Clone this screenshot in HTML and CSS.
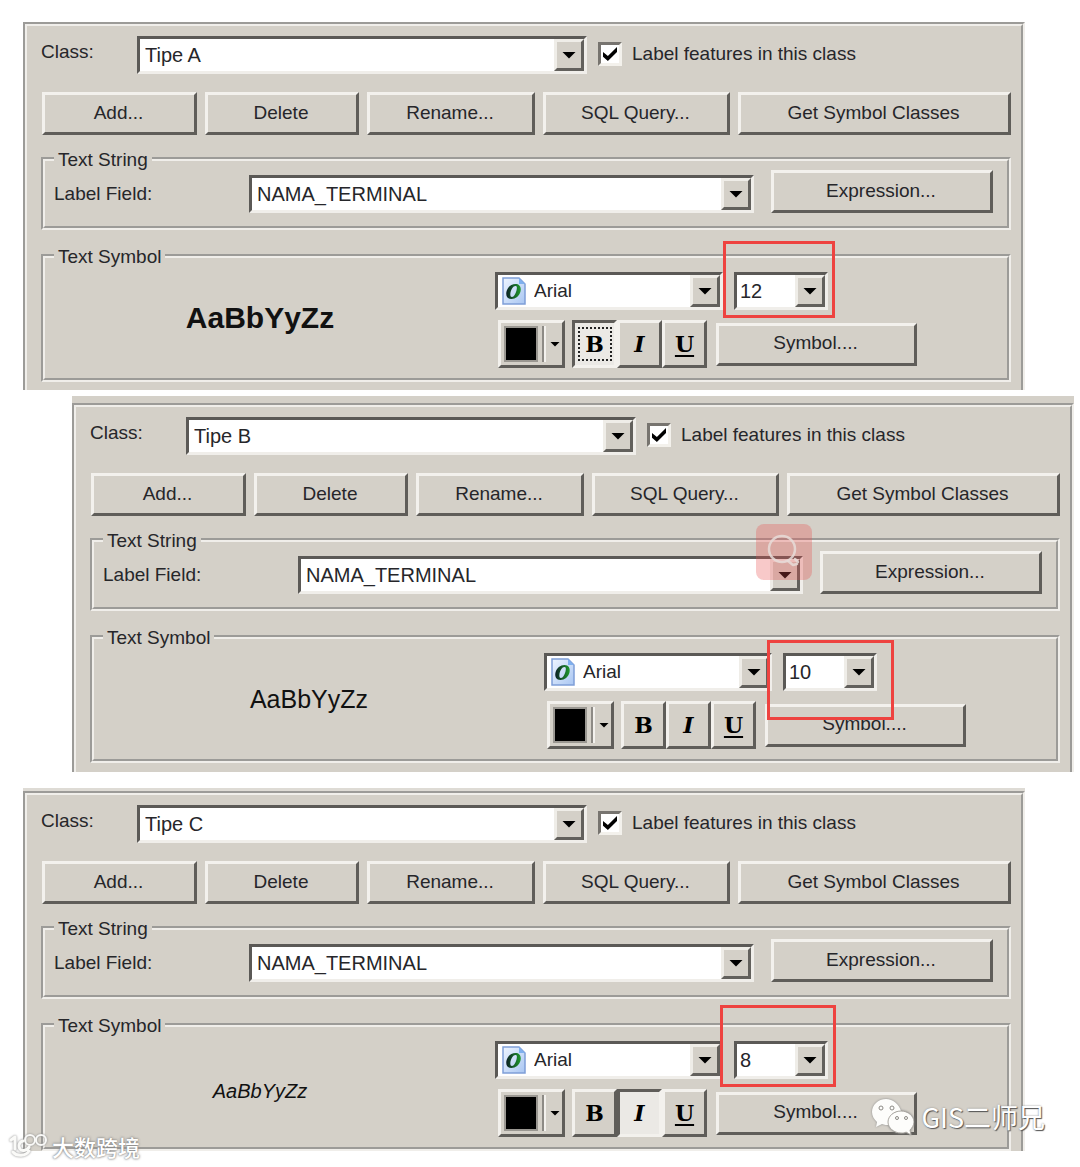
FILE: index.html
```html
<!DOCTYPE html>
<html lang="en">
<head>
<meta charset="utf-8">
<title>Label classes</title>
<link rel="stylesheet" href="styles.css">
</head>
<body>
<svg class="defs" aria-hidden="true">
  <defs>
    <linearGradient id="page" x1="0" y1="0" x2="1" y2="1"><stop offset="0" stop-color="#eef5ff"/><stop offset="1" stop-color="#a9c6f2"/></linearGradient>
    <linearGradient id="oh" x1="0" y1="0" x2="1" y2="0"><stop offset="0" stop-color="#0c2024"/><stop offset="1" stop-color="#1f9a2c"/></linearGradient>
    <symbol id="opentype" viewBox="0 0 24 28">
      <path d="M1 1h16l6 6v20H1z" fill="url(#page)" stroke="#7f9fd8" stroke-width="1.5"/>
      <path d="M17 1v6h6z" fill="#7fb0ee"/>
      <path fill-rule="evenodd" fill="url(#oh)" d="M13.500 7C17.500 7 19.500 10 18.500 14.500C17.500 19 13.500 22 9.500 22C5.500 22 3.500 19 4.500 14.500C5.500 10 9.500 7 13.500 7zM13.500 9C11 9 9.500 12 8.500 15.500C8 18.500 8.500 20 10 20C12 20 13.500 17 14.500 13.500C15.200 10.500 15 9 13.500 9z"/>
    </symbol>
  </defs>
</svg>
<main class="page">

  <section class="panel">
    <div class="class-row">
      <label class="class-label" for="class-a">Class:</label>
      <div class="combo"><select id="class-a"><option>Tipe A</option></select><span class="arrow"></span></div>
      <label class="check"><input type="checkbox" checked>Label features in this class</label>
    </div>
    <div class="actions">
      <button class="btn">Add...</button><button class="btn">Delete</button><button class="btn">Rename...</button><button class="btn">SQL Query...</button><button class="btn">Get Symbol Classes</button>
    </div>
    <fieldset class="group">
      <legend>Text String</legend>
      <div class="field-row">
        <label for="field-a">Label Field:</label>
        <div class="combo"><select id="field-a"><option>NAMA_TERMINAL</option></select><span class="arrow"></span></div>
        <button class="btn">Expression...</button>
      </div>
    </fieldset>
    <fieldset class="group">
      <legend>Text Symbol</legend>
      <div class="symbol-grid">
        <div class="preview preview-bold">AaBbYyZz</div>
        <div class="controls">
          <div class="font-row">
            <div class="combo font"><svg class="font-icon"><use href="#opentype"/></svg><select aria-label="Font"><option>Arial</option></select><span class="arrow"></span></div>
            <div class="size"><div class="combo"><select aria-label="Size"><option>12</option></select><span class="arrow"></span></div><span class="mark mark-a"></span></div>
          </div>
          <div class="style-row">
            <button class="color" aria-label="Color"><span class="swatch"></span><span class="divider"></span><span class="caret"></span></button>
            <div class="toggles"><button class="toggle on focused" aria-label="Bold"><b>B</b></button><button class="toggle" aria-label="Italic"><i>I</i></button><button class="toggle" aria-label="Underline"><u>U</u></button></div>
            <button class="btn symbol">Symbol....</button>
          </div>
        </div>
      </div>
    </fieldset>
  </section>

  <section class="panel panel-b">
    <div class="class-row">
      <label class="class-label" for="class-b">Class:</label>
      <div class="combo"><select id="class-b"><option>Tipe B</option></select><span class="arrow"></span></div>
      <label class="check"><input type="checkbox" checked>Label features in this class</label>
    </div>
    <div class="actions">
      <button class="btn">Add...</button><button class="btn">Delete</button><button class="btn">Rename...</button><button class="btn">SQL Query...</button><button class="btn">Get Symbol Classes</button>
    </div>
    <fieldset class="group">
      <legend>Text String</legend>
      <div class="field-row">
        <label for="field-b">Label Field:</label>
        <div class="combo"><select id="field-b"><option>NAMA_TERMINAL</option></select><span class="arrow"></span>
          <svg class="search-badge" viewBox="0 0 56 56"><rect width="56" height="56" rx="8" fill="#e84c4c" fill-opacity=".3"/><g fill="none" stroke="#e6dcd8" stroke-opacity=".85" stroke-width="2.5" stroke-linecap="round"><circle cx="26" cy="25" r="13"/><path d="M32 37l5 4M39 35l3 3M37 41l4-1"/></g></svg>
        </div>
        <button class="btn">Expression...</button>
      </div>
    </fieldset>
    <fieldset class="group">
      <legend>Text Symbol</legend>
      <div class="symbol-grid">
        <div class="preview preview-regular">AaBbYyZz</div>
        <div class="controls">
          <div class="font-row">
            <div class="combo font"><svg class="font-icon"><use href="#opentype"/></svg><select aria-label="Font"><option>Arial</option></select><span class="arrow"></span></div>
            <div class="size"><div class="combo"><select aria-label="Size"><option>10</option></select><span class="arrow"></span></div><span class="mark mark-b"></span></div>
          </div>
          <div class="style-row">
            <button class="color" aria-label="Color"><span class="swatch"></span><span class="divider"></span><span class="caret"></span></button>
            <div class="toggles"><button class="toggle" aria-label="Bold"><b>B</b></button><button class="toggle" aria-label="Italic"><i>I</i></button><button class="toggle" aria-label="Underline"><u>U</u></button></div>
            <button class="btn symbol">Symbol....</button>
          </div>
        </div>
      </div>
    </fieldset>
  </section>

  <section class="panel panel-c">
    <div class="class-row">
      <label class="class-label" for="class-c">Class:</label>
      <div class="combo"><select id="class-c"><option>Tipe C</option></select><span class="arrow"></span></div>
      <label class="check"><input type="checkbox" checked>Label features in this class</label>
    </div>
    <div class="actions">
      <button class="btn">Add...</button><button class="btn">Delete</button><button class="btn">Rename...</button><button class="btn">SQL Query...</button><button class="btn">Get Symbol Classes</button>
    </div>
    <fieldset class="group">
      <legend>Text String</legend>
      <div class="field-row">
        <label for="field-c">Label Field:</label>
        <div class="combo"><select id="field-c"><option>NAMA_TERMINAL</option></select><span class="arrow"></span></div>
        <button class="btn">Expression...</button>
      </div>
    </fieldset>
    <fieldset class="group">
      <legend>Text Symbol</legend>
      <div class="symbol-grid">
        <div class="preview preview-italic">AaBbYyZz</div>
        <div class="controls">
          <div class="font-row">
            <div class="combo font"><svg class="font-icon"><use href="#opentype"/></svg><select aria-label="Font"><option>Arial</option></select><span class="arrow"></span></div>
            <div class="size"><div class="combo"><select aria-label="Size"><option>8</option></select><span class="arrow"></span></div><span class="mark mark-c"></span></div>
          </div>
          <div class="style-row">
            <button class="color" aria-label="Color"><span class="swatch"></span><span class="divider"></span><span class="caret"></span></button>
            <div class="toggles"><button class="toggle" aria-label="Bold"><b>B</b></button><button class="toggle on" aria-label="Italic"><i>I</i></button><button class="toggle" aria-label="Underline"><u>U</u></button></div>
            <button class="btn symbol">Symbol....</button>
          </div>
        </div>
      </div>
    </fieldset>
  </section>

  <div class="credit credit-left">
    <svg width="38" height="24" viewBox="0 0 38 24" fill="none" stroke="#fafaf8" stroke-linecap="round" stroke-linejoin="round"><path d="M2 6l4-3v12" stroke-width="3"/><path d="M14 7c-4 1-5 5-3 8c2 3 8 1 9-2M4 18c4 5 13 4 16-1" stroke-width="3"/><circle cx="21" cy="6" r="5" stroke-width="2"/><circle cx="32" cy="6" r="5" stroke-width="2"/></svg>
    <span>大数跨境</span>
  </div>
  <div class="credit credit-right">
    <svg width="42" height="36" viewBox="0 0 42 36"><path d="M14 0C6 0 0 6 0 13c0 4 2 7 5 10l-1 5 6-3c2 1 5 1 7 1-2-8 4-14 12-14C27 5 21 0 14 0z" fill="#fdfdfb"/><path d="M29 12c-7 0-13 5-13 11s6 11 13 11c2 0 4 0 5-1l5 3-1-5c2-2 4-5 4-8 0-6-6-11-13-11z" fill="#fdfdfb" stroke="#aaa7a1"/><g fill="#fdfdfb" stroke="#8c8a85"><circle cx="9" cy="9" r="2"/><circle cx="20" cy="9" r="2"/><circle cx="25" cy="19" r="1.500"/><circle cx="34" cy="19" r="1.500"/></g></svg>
    <span>GIS二师兄</span>
  </div>
</main>
</body>
</html>
```
FILE: styles.css
```css
* { box-sizing: border-box; }

body {
  margin: 0;
  background: #fff;
  color: #26262a;
  font: 19px/24px "Liberation Sans", Arial, sans-serif;
}

.defs { position: absolute; width: 0; height: 0; }

.page { position: relative; padding: 22px 55px 15px 23px; }

.panel {
  padding: 10px 10px 8px 14px;
  border: 4px groove #f0eeea;
  border-bottom: 0;
  background: #d4d0c8;
}
.panel-b { margin: 13px -49px 0 49px; padding-bottom: 9px; box-shadow: 0 -7px 0 #d4d0c8; }
.panel-c { margin-top: 19px; padding-bottom: 0; box-shadow: 0 -3px 0 #dedbd5; }

button, select { margin: 0; color: inherit; font: inherit; }

.class-row { display: grid; grid-template-columns: 96fr 450fr 424fr; align-items: center; }
.class-label { padding-bottom: 6px; }
.check { display: flex; align-items: center; gap: 10px; padding: 0 0 2px 11px; white-space: nowrap; }
.check input {
  appearance: none;
  width: 24px;
  height: 24px;
  margin: 0;
  border: 3px solid;
  border-color: #77746f #f3f1ec #f3f1ec #77746f;
  background: #fff;
  display: grid;
  place-items: center;
}
.check input:checked::before {
  content: "";
  width: 14px;
  height: 14px;
  background: #000;
  clip-path: polygon(0 35%, 35% 65%, 100% 0, 100% 35%, 35% 100%, 0 70%);
}

.combo {
  position: relative;
  display: grid;
  height: 38px;
  border: 3px solid;
  border-color: #5b5956 #f0eeea #f0eeea #5b5956;
  background: #fff;
}
.combo select {
  grid-area: 1 / 1;
  appearance: none;
  width: 100%;
  min-width: 0;
  padding: 0 32px 0 5px;
  border: 0;
  border-radius: 0;
  background: transparent;
  font-size: 20px;
}
.arrow {
  grid-area: 1 / 1;
  justify-self: end;
  display: grid;
  place-items: center;
  width: 30px;
  border: 3px solid;
  border-color: #efede8 #62605c #62605c #efede8;
  background: #d4d0c8;
  pointer-events: none;
}
.arrow::before, .caret {
  content: "";
  width: 14px;
  height: 7px;
  background: #000;
  clip-path: polygon(0 0, 100% 0, 50% 100%);
}

.actions {
  display: grid;
  grid-template-columns: 155fr 154fr 168fr 187fr 273fr;
  gap: 8px;
  margin: 18px 0 12px 1px;
}
.btn {
  height: 43px;
  padding: 0 2px 2px 0;
  border: 3px solid;
  border-color: #f3f1ed #5f5d59 #5f5d59 #f3f1ed;
  border-radius: 0;
  background: #d4d0c8;
  white-space: nowrap;
}

.group {
  min-width: 0;
  margin: 0;
  padding: 0 14px 13px 9px;
  border: 4px groove #f0eeea;
}
.group + .group { margin-top: 14px; padding-bottom: 10px; }
.group legend { padding: 3px 4px 0; line-height: 20px; }

.field-row { display: grid; grid-template-columns: 195fr 522fr 222fr; align-items: end; }
.field-row label { padding-bottom: 7px; }
.field-row .combo { margin-right: 17px; }

.symbol-grid { display: grid; grid-template-columns: 412fr 498fr; gap: 29px; }
.preview { align-self: center; color: #111; text-align: center; }
.preview-bold { font-size: 30px; font-weight: bold; }
.preview-regular { font-size: 25px; }
.preview-italic { padding-top: 8px; font-size: 20px; font-style: italic; }
.controls { padding-top: 5px; }
.font-row { display: flex; gap: 11px; }
.font { width: 228px; }
.font-icon { grid-area: 1 / 1; align-self: center; width: 24px; height: 28px; margin-left: 4px; }
.font select { padding-left: 36px; font-size: 19px; }
.size { position: relative; width: 94px; }
.size select { padding-left: 3px; }

.style-row { display: flex; align-items: center; margin: 10px 0 0 3px; }
.color {
  display: flex;
  align-items: center;
  width: 67px;
  height: 48px;
  padding: 0 0 0 3px;
  border: 3px solid;
  border-color: #f3f1ed #5f5d59 #5f5d59 #f3f1ed;
  background: #d4d0c8;
}
.swatch { width: 34px; height: 36px; border: 2px solid #9a9791; background: #000; }
.divider { width: 4px; height: 36px; margin: 0 4px; border-left: 2px solid #8d8a85; border-right: 2px solid #f3f1ed; }
.caret { width: 10px; height: 5px; }
.toggles { display: flex; width: 135px; margin: 0 9px 0 7px; }
.toggle {
  display: grid;
  place-items: center;
  flex: 1;
  height: 48px;
  padding: 0;
  border: 3px solid;
  border-color: #f3f1ed #5f5d59 #5f5d59 #f3f1ed;
  background: #d4d0c8;
  color: #000;
  font: bold 22px/24px "DejaVu Serif", serif;
}
.toggle.on { border-color: #5f5d59 #f3f1ed #f3f1ed #5f5d59; background: #ebe9e5; }
.toggle.focused b { display: grid; place-items: center; width: 34px; height: 34px; border: 2px dotted #222; }
.toggle u { text-decoration-thickness: 2px; text-underline-offset: 3px; }
.symbol { width: 201px; }

.mark { position: absolute; border: 3px solid #ee4340; pointer-events: none; }
.mark-a { left: -11px; top: -31px; width: 112px; height: 77px; }
.mark-b { left: -16px; top: -13px; width: 127px; height: 80px; }
.mark-c { left: -14px; top: -36px; width: 116px; height: 82px; }

.search-badge { position: absolute; right: -12px; top: -35px; width: 56px; height: 56px; }

.credit { position: absolute; display: flex; align-items: center; color: #fff; font-family: "Noto Sans CJK SC", sans-serif; white-space: nowrap; }
.credit-left { left: 9px; bottom: 8px; gap: 5px; font-size: 22px; font-weight: 500; text-shadow: 0 0 2px #777, 0 0 3px #999; }
.credit-left svg { filter: drop-shadow(0 0 1px #888); }
.credit-right { right: 35px; bottom: 31px; gap: 7px; font-size: 27px; text-shadow: 1px 1px 1px #555, 0 0 2px #888; }
.credit-right svg { filter: drop-shadow(0 0 1px #888); }
```
